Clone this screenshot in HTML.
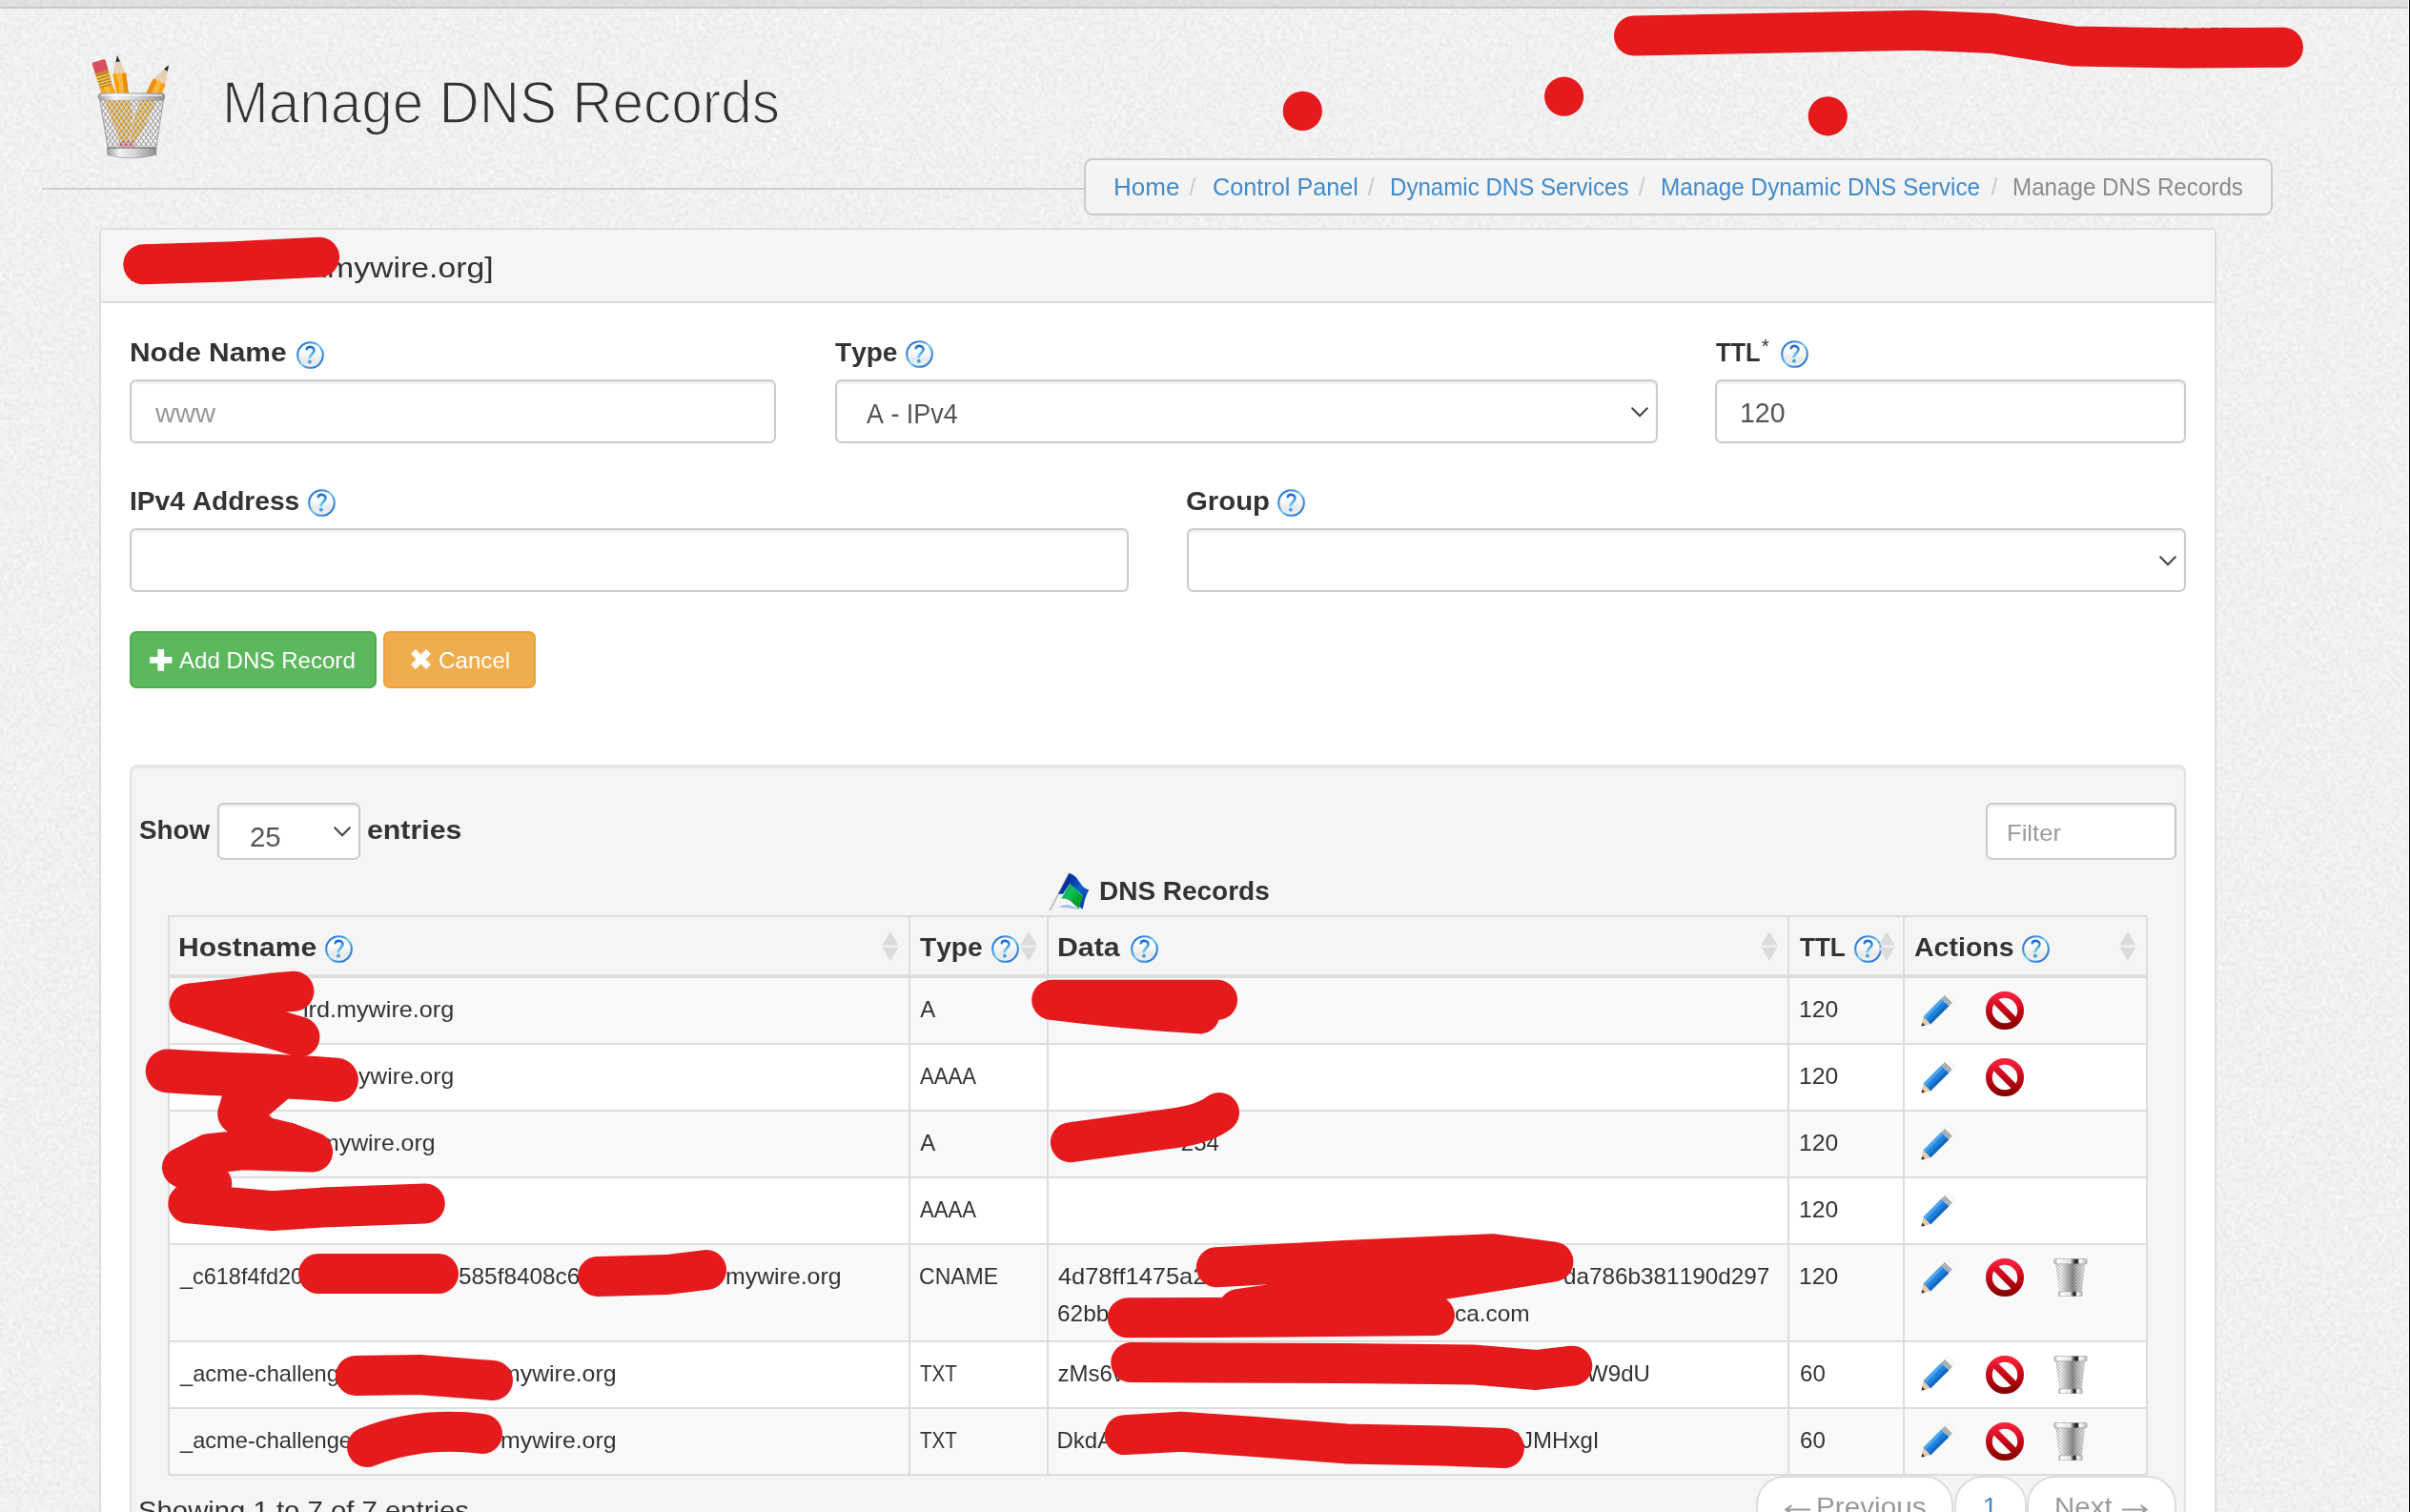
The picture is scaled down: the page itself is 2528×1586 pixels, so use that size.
<!DOCTYPE html>
<html><head><meta charset="utf-8"><title>Manage DNS Records</title>
<style>
html,body{margin:0;padding:0;}
body{width:2528px;height:1586px;overflow:hidden;background:#f0f0f0;font-family:"Liberation Sans",sans-serif;}
#pg{position:absolute;left:0;top:0;width:2528px;height:1586px;overflow:hidden;will-change:transform;}
.t{position:absolute;font-kerning:none;white-space:nowrap;line-height:1;display:block;}
.b{position:absolute;box-sizing:border-box;display:block;}
.inp{background:#fff;border:2px solid #ccc;border-radius:6.5px;box-shadow:inset 0 2px 2px rgba(0,0,0,.075);}
</style></head>
<body>
<svg width="0" height="0" style="position:absolute">
<defs>
<linearGradient id="hg" x1="0.15" y1="0.15" x2="0.85" y2="0.85"><stop offset="0" stop-color="#2b7bd8"/><stop offset="0.32" stop-color="#4d9fe4"/><stop offset="0.5" stop-color="#74d0f6"/><stop offset="0.68" stop-color="#4d9fe4"/><stop offset="1" stop-color="#2b7bd8"/></linearGradient>
<linearGradient id="hf" x1="0" y1="0" x2="0" y2="1"><stop offset="0" stop-color="#ffffff"/><stop offset="0.35" stop-color="#ffffff"/><stop offset="0.7" stop-color="#e9e9e9"/><stop offset="1" stop-color="#f1f1f1"/></linearGradient>
<linearGradient id="hq" gradientUnits="userSpaceOnUse" x1="0" y1="6" x2="0" y2="18"><stop offset="0" stop-color="#1a68ca"/><stop offset="0.45" stop-color="#4aa6e8"/><stop offset="1" stop-color="#72d2f6"/></linearGradient>
<linearGradient id="fb" x1="0" y1="0" x2="1" y2="0.6"><stop offset="0" stop-color="#0d2f9a"/><stop offset="0.35" stop-color="#07309f"/><stop offset="0.7" stop-color="#0a62cf"/><stop offset="1" stop-color="#0b3fae"/></linearGradient>
<linearGradient id="fgn" x1="0" y1="0" x2="1" y2="1"><stop offset="0" stop-color="#06a02a"/><stop offset="0.4" stop-color="#0cc060"/><stop offset="0.7" stop-color="#05a01c"/><stop offset="1" stop-color="#0aa830"/></linearGradient>
<linearGradient id="ng2" gradientUnits="userSpaceOnUse" x1="0" y1="3" x2="0" y2="37"><stop offset="0" stop-color="#f5213a"/><stop offset="0.4" stop-color="#d00a1e"/><stop offset="1" stop-color="#8a0000"/></linearGradient>
<linearGradient id="ng" x1="0" y1="0" x2="0" y2="1"><stop offset="0" stop-color="#f5213a"/><stop offset="0.45" stop-color="#cc0a1c"/><stop offset="1" stop-color="#8a0000"/></linearGradient>
<linearGradient id="tg" x1="0" y1="0" x2="1" y2="0"><stop offset="0" stop-color="#d8d8d8"/><stop offset="0.18" stop-color="#f6f6f6"/><stop offset="0.42" stop-color="#b8b8b8"/><stop offset="0.58" stop-color="#8a8a8a"/><stop offset="0.75" stop-color="#c4c4c4"/><stop offset="1" stop-color="#ededed"/></linearGradient>
<linearGradient id="tr" x1="0" y1="0" x2="1" y2="0"><stop offset="0" stop-color="#b0b0b0"/><stop offset="0.12" stop-color="#ffffff"/><stop offset="0.5" stop-color="#e2e2e2"/><stop offset="0.6" stop-color="#555"/><stop offset="0.7" stop-color="#111"/><stop offset="0.78" stop-color="#ffffff"/><stop offset="1" stop-color="#b8b8b8"/></linearGradient>
<linearGradient id="cupg" x1="0" y1="0" x2="1" y2="0"><stop offset="0" stop-color="#9c9c9c"/><stop offset="0.25" stop-color="#f4f4f4"/><stop offset="0.6" stop-color="#d0d0d0"/><stop offset="1" stop-color="#8f8f8f"/></linearGradient>
<pattern id="mesh" width="5" height="7" patternUnits="userSpaceOnUse"><path d="M0,0L5,7M5,0L0,7" stroke="#8f8f8f" stroke-width="1.1" fill="none"/></pattern>
<pattern id="meshw" width="5" height="7" patternUnits="userSpaceOnUse" x="1.2" y="0"><path d="M0,0L5,7M5,0L0,7" stroke="#ffffff" stroke-width="0.9" fill="none" opacity="0.85"/></pattern>
<pattern id="mesh2" width="2.6" height="2.6" patternUnits="userSpaceOnUse" patternTransform="rotate(45)"><circle cx="1.3" cy="1.3" r="0.75" fill="#3a3a3a" opacity="0.5"/></pattern>

<symbol id="help" viewBox="0 0 29 29">
 <circle cx="14.5" cy="14.5" r="13.3" fill="url(#hf)" stroke="url(#hg)" stroke-width="2.1"/>
 <path d="M10.7,8.3 C11.6,6.3 14,5.7 16,6.3 C18.5,7.1 19.1,9.4 17.9,11.3 C16.7,13.2 14.5,14.8 13.6,17.3" fill="none" stroke="url(#hq)" stroke-width="2.7" stroke-linecap="round"/>
 <circle cx="13.9" cy="21.7" r="1.9" fill="#3f9be6"/>
</symbol>

<symbol id="pencil" viewBox="0 0 36 36">
 <path d="M0.4,35.6 L2.6,25.6 L10.2,33.2 Z" fill="#ecc9a2"/>
 <path d="M0.4,35.6 L1.3,31.6 L4.4,34.7 Z" fill="#3c332e"/>
 <path d="M2.6,25.6 L21.6,6.4 L29.4,14.2 L10.2,33.2 Z" fill="#1f82dc"/>
 <path d="M2.6,25.6 L21.6,6.4 L24,8.8 L5,28 Z" fill="#4da4ee"/>
 <path d="M7.8,30.8 L27,11.8 L29.4,14.2 L10.2,33.2 Z" fill="#1468bd"/>
 <path d="M21.6,6.4 L25.2,2.8 L33,10.6 L29.4,14.2 Z" fill="#c4c8cb"/>
 <path d="M22.6,5.4 L30.4,13.2 M24.2,3.8 L32,11.6" stroke="#777d82" stroke-width="1"/>
 <path d="M25.2,2.8 L27.4,0.8 Q28.4,0 29.4,1 L35,6.6 Q35.8,7.6 35,8.4 L33,10.6 Z" fill="#fafafa" stroke="#dcdcdc" stroke-width="0.5"/>
</symbol>

<symbol id="noent" viewBox="0 0 40 40">
 <circle cx="20" cy="20" r="16.6" fill="none" stroke="url(#ng)" stroke-width="6.8"/>
 <path d="M8.8,8.8 L31.2,31.2" stroke="url(#ng2)" stroke-width="7"/>
</symbol>

<symbol id="trash" viewBox="0 0 36 40">
 <path d="M2.2,5 L33.4,5 L29.8,35.6 L6.2,35.6 Z" fill="url(#tg)"/>
 <path d="M2.2,5 L33.4,5 L29.8,35.6 L6.2,35.6 Z" fill="url(#mesh2)"/>
 <rect x="0.8" y="0.5" width="34.3" height="5.3" rx="1.2" fill="url(#tr)" stroke="#8a8a8a" stroke-width="0.5"/>
 <rect x="5.6" y="34.8" width="24.6" height="4.9" rx="1" fill="url(#tr)" stroke="#8a8a8a" stroke-width="0.5"/>
</symbol>

<symbol id="flag" viewBox="0 0 60 54">
 <path d="M16.4,43.8 C22,39.4 30,40 39.6,46.6 C30,44.6 23,44.2 16.4,43.8Z" fill="#9db9ea" opacity="0.85"/>
 <path d="M27.6,7.4 L7.2,47.2" stroke="#a2a2a2" stroke-width="1.1"/>
 <path d="M28.4,7.8 L8,47.6" stroke="#d8d8d8" stroke-width="0.7"/>
 <path d="M27.5,7.9 C33,9.5 36.2,13 39.3,18.6 C42,23 45,24.6 48.2,25.4 C45,31 43,38 41.8,45.7 C40,44.6 38.6,43.4 37.5,42.2 L41.8,31.4 L28.2,19.3 L21,29.7 L16.1,29.7 Z" fill="url(#fb)"/>
 <path d="M28.6,19.6 L13.8,45.6" stroke="#efefef" stroke-width="1.2"/>
 <path d="M28.2,19.3 C32,21 35,25 38,28.5 C40,30.4 41,31 41.8,31.4 C40,36 38.8,40.6 37.9,45.4 C34,42 30,37.2 26,35.4 C23,34.3 21,34.5 19.3,34.5 Z" fill="url(#fgn)"/>
</symbol>

<symbol id="sort" viewBox="0 0 18 31">
 <path d="M9,0 L17.6,14.4 L0.4,14.4 Z" fill="#dcdcdc"/>
 <path d="M9,31 L17.6,16.6 L0.4,16.6 Z" fill="#dcdcdc"/>
</symbol>

<symbol id="chev" viewBox="0 0 18 11">
 <path d="M1.2,1.2 L9,9.3 L16.8,1.2" fill="none" stroke="#444" stroke-width="2" stroke-linecap="round" stroke-linejoin="miter"/>
</symbol>

<symbol id="cup" viewBox="0 0 104 125">
 <!-- eraser pencil -->
 <path d="M10.6,16.9 Q11,15.6 12.5,15.2 L22.4,12.2 Q24,11.9 24.6,13.2 L27.7,23.6 L13.9,27.7 Z" fill="#d9505c"/>
 <path d="M13.9,27.7 L27.7,23.6 L31.8,38.9 L19,43 Z" fill="#c58a1a"/>
 <path d="M15.2,31.6 L28.7,27.5 M16.2,34.6 L29.6,30.6 M17.2,37.6 L30.5,33.7 M18.2,40.5 L31.3,36.7" stroke="#f1cf7a" stroke-width="1.3"/>
 <path d="M19,43 L31.8,38.9 L36,48.6 L20.5,48.6 Z" fill="#f7a20f"/>
 <path d="M23,41.7 L27.6,40.3 L31,48.6 L25,48.6Z" fill="#fdb83e"/>
 <!-- middle pencil -->
 <path d="M37,8.3 L46.3,27.3 L32.2,28.5 Z" fill="#ebcfb2"/>
 <path d="M37,8.3 L39.9,14.4 L35.4,15 Z" fill="#2a2a2a"/>
 <path d="M32.2,28.5 Q34.5,26 36.5,28.1 Q39.4,25.4 42,27.7 Q44.4,25.6 46.3,27.3 L48.9,48.6 L36.4,48.6 Z" fill="#f7a20f"/>
 <path d="M36.5,28.1 Q39.4,25.4 42,27.7 L44.5,48.6 L40,48.6 Z" fill="#fdb83e"/>
 <path d="M42,27.7 Q44.4,25.6 46.3,27.3 L48.9,48.6 L44.5,48.6Z" fill="#e8900a"/>
 <!-- right pencil -->
 <path d="M90.9,18.2 L87.6,38.9 L74.4,33.1 Z" fill="#ebcfb2"/>
 <path d="M90.9,18.2 L89.9,24.7 L85.9,22.4 Z" fill="#2a2a2a"/>
 <path d="M74.4,33.1 Q77.6,32.3 78.6,35 Q82,34 83.2,37 Q86,36.4 87.6,38.9 L83.5,48.6 L67,48.6 Z" fill="#f7a20f"/>
 <path d="M78.6,35 Q82,34 83.2,37 L78.5,48.6 L72.5,48.6 Z" fill="#fdb83e"/>
 <path d="M74.4,33.1 Q77.6,32.3 78.6,35 L72.5,48.6 L67,48.6Z" fill="#e8900a"/>
 <!-- basket body -->
 <path d="M18.6,54 L85.6,54 L77.7,106 L27.3,106 Z" fill="#e9e9e9"/>
 <path d="M23.1,55 L51.3,55 L53,72 L49,100 L41,100 Z" fill="#f5a614"/>
 <path d="M61.2,55 L78,55 L62,90 L54,101 L50,100 L53,80 Z" fill="#f5a614"/>
 <path d="M39.5,98 L55,98 L55.4,107 L39,107Z" fill="#d9505c"/>
 <path d="M18.6,54 L85.6,54 L77.7,106 L27.3,106 Z" fill="url(#mesh)"/>
 <path d="M18.6,54 L85.6,54 L77.7,106 L27.3,106 Z" fill="url(#meshw)"/>
 <path d="M18.6,54 L27.3,106 M85.6,54 L77.7,106" stroke="#a8a8a8" stroke-width="1.2"/>
 <!-- rim -->
 <rect x="16.9" y="47.6" width="70.1" height="7.8" rx="3.9" fill="url(#cupg)" stroke="#9a9a9a" stroke-width="0.6"/>
 <path d="M20,50 H84" stroke="#fff" stroke-width="1.6" opacity="0.8"/>
 <!-- base -->
 <path d="M26.3,104.5 L78.1,104.5 L77.8,112.5 Q52,119 26.6,112.5 Z" fill="url(#cupg)" stroke="#8a8a8a" stroke-width="0.6"/>
 <path d="M27,105.5 H77.5" stroke="#666" stroke-width="1.2" opacity="0.6"/>
</symbol>
</defs>
</svg>
<svg class="b" style="left:0;top:0" width="2528" height="1586"><filter id="nz" x="0" y="0" width="100%" height="100%" color-interpolation-filters="sRGB"><feTurbulence type="fractalNoise" baseFrequency="0.22" numOctaves="2" seed="7"/><feColorMatrix type="matrix" values="0.09 0 0 0 0.899  0.09 0 0 0 0.899  0.09 0 0 0 0.899  0 0 0 0 1"/></filter><rect width="2528" height="1586" filter="url(#nz)"/></svg>
<div id="pg">
<div class="b" style="left:0.00px;top:0.00px;width:2528.00px;height:7.00px;background:rgba(0,0,0,0.068);"></div>
<div class="b" style="left:0.00px;top:7.00px;width:2528.00px;height:2.00px;background:#c9c9c9;"></div>
<div class="b" style="left:2526.00px;top:0.00px;width:1.00px;height:1586.00px;background:#fff;"></div>
<div class="b" style="left:2527.00px;top:0.00px;width:1.00px;height:1586.00px;background:#000;"></div>
<svg class="b" style="left:86.00px;top:50.00px;" width="104" height="125"><use href="#cup"/></svg>
<span class="t" style="left:233.40px;top:76.07px;font-size:63.0px;color:#333;letter-spacing:0.000px;transform:scaleX(0.9283);transform-origin:0 0;-webkit-text-stroke:1.7px #f0f0f0;">Manage DNS Records</span>
<span class="t" style="left:2231.72px;top:26.38px;font-size:22.0px;color:#555;letter-spacing:0.000px;">98.212.177.204</span>
<div class="b" style="left:44.00px;top:197.00px;width:1094.00px;height:2.00px;background:#cfcfcf;"></div>
<div class="b" style="left:1137.30px;top:165.90px;width:1247.00px;height:60.30px;background:#f4f4f4;border:2px solid #cbcbcb;border-radius:9px;"></div>
<span class="t" style="left:1167.77px;top:184.14px;font-size:25.0px;color:#428bca;letter-spacing:0.000px;transform:scaleX(1.0405);transform-origin:0 0;">Home</span>
<span class="t" style="left:1247.50px;top:184.14px;font-size:25.0px;color:#ccc;letter-spacing:0.000px;">/</span>
<span class="t" style="left:1272.22px;top:184.14px;font-size:25.0px;color:#428bca;letter-spacing:0.000px;transform:scaleX(1.0099);transform-origin:0 0;">Control Panel</span>
<span class="t" style="left:1434.70px;top:184.14px;font-size:25.0px;color:#ccc;letter-spacing:0.000px;">/</span>
<span class="t" style="left:1458.42px;top:184.14px;font-size:25.0px;color:#428bca;letter-spacing:0.000px;transform:scaleX(0.9641);transform-origin:0 0;">Dynamic DNS Services</span>
<span class="t" style="left:1718.80px;top:184.14px;font-size:25.0px;color:#ccc;letter-spacing:0.000px;">/</span>
<span class="t" style="left:1742.41px;top:184.14px;font-size:25.0px;color:#428bca;letter-spacing:0.000px;transform:scaleX(0.9724);transform-origin:0 0;">Manage Dynamic DNS Service</span>
<span class="t" style="left:2088.50px;top:184.14px;font-size:25.0px;color:#ccc;letter-spacing:0.000px;">/</span>
<span class="t" style="left:2111.22px;top:184.14px;font-size:25.0px;color:#8c8c8c;letter-spacing:0.000px;transform:scaleX(0.9674);transform-origin:0 0;">Manage DNS Records</span>
<div class="b" style="left:104.00px;top:239.00px;width:2221.00px;height:1461.00px;background:#fff;border:2px solid #dedede;border-radius:6px;"></div>
<div class="b" style="left:106.00px;top:241.00px;width:2217.00px;height:75.00px;background:#f5f5f5;border-radius:4px 4px 0 0;"></div>
<div class="b" style="left:106.00px;top:316.00px;width:2217.00px;height:2.00px;background:#ddd;"></div>
<span class="t" style="left:134.93px;top:264.95px;font-size:29.0px;color:#999;letter-spacing:0.000px;">[</span>
<span class="t" style="left:149.01px;top:266.75px;font-size:29.0px;color:#333;letter-spacing:0.000px;transform:scaleX(1.2301);transform-origin:0 0;">someserver.</span>
<span class="t" style="left:342.66px;top:266.75px;font-size:29.0px;color:#333;letter-spacing:0.000px;transform:scaleX(1.1655);transform-origin:0 0;">mywire.org]</span>
<span class="t" style="left:136.30px;top:356.00px;font-size:28.0px;font-weight:bold;color:#333;letter-spacing:0.000px;transform:scaleX(1.0687);transform-origin:0 0;">Node Name</span>
<svg class="b" style="left:310.50px;top:357.50px;" width="29" height="29"><use href="#help"/></svg>
<span class="t" style="left:875.68px;top:356.00px;font-size:28.0px;font-weight:bold;color:#333;letter-spacing:0.000px;transform:scaleX(1.0019);transform-origin:0 0;">Type</span>
<svg class="b" style="left:949.80px;top:357.10px;" width="29" height="29"><use href="#help"/></svg>
<span class="t" style="left:1799.71px;top:356.00px;font-size:28.0px;font-weight:bold;color:#333;letter-spacing:0.000px;transform:scaleX(0.9095);transform-origin:0 0;">TTL</span>
<svg class="b" style="left:1867.50px;top:357.10px;" width="29" height="29"><use href="#help"/></svg>
<span class="t" style="left:1847.66px;top:351.72px;font-size:21.0px;color:#333;letter-spacing:0.000px;">*</span>
<span class="t" style="left:136.42px;top:511.90px;font-size:28.0px;font-weight:bold;color:#333;letter-spacing:0.000px;transform:scaleX(1.0046);transform-origin:0 0;">IPv4 Address</span>
<svg class="b" style="left:322.50px;top:512.90px;" width="29" height="29"><use href="#help"/></svg>
<span class="t" style="left:1244.40px;top:511.90px;font-size:28.0px;font-weight:bold;color:#333;letter-spacing:0.000px;transform:scaleX(1.0479);transform-origin:0 0;">Group</span>
<svg class="b" style="left:1340.20px;top:512.90px;" width="29" height="29"><use href="#help"/></svg>
<div class="b inp" style="left:136.00px;top:398.00px;width:678.40px;height:67.40px;"></div>
<span class="t" style="left:163.04px;top:419.60px;font-size:28.0px;color:#999;letter-spacing:0.000px;transform:scaleX(1.0400);transform-origin:0 0;">www</span>
<div class="b inp" style="left:875.60px;top:398.00px;width:863.20px;height:67.40px;"></div>
<span class="t" style="left:909.15px;top:419.75px;font-size:29.0px;color:#555;letter-spacing:0.000px;transform:scaleX(0.9273);transform-origin:0 0;">A - IPv4</span>
<svg class="b" style="left:1710.80px;top:427.40px;" width="18" height="11"><use href="#chev"/></svg>
<div class="b inp" style="left:1799.20px;top:398.00px;width:493.40px;height:67.40px;"></div>
<span class="t" style="left:1825.23px;top:418.75px;font-size:29.0px;color:#555;letter-spacing:0.000px;transform:scaleX(0.9835);transform-origin:0 0;">120</span>
<div class="b inp" style="left:136.00px;top:554.00px;width:1047.60px;height:67.20px;"></div>
<div class="b inp" style="left:1244.60px;top:554.00px;width:1048.00px;height:67.20px;"></div>
<svg class="b" style="left:2264.60px;top:583.00px;" width="18" height="11"><use href="#chev"/></svg>
<div class="b" style="left:136.20px;top:661.80px;width:258.70px;height:60.20px;background:#5cb85c;border:2px solid #4cae4c;border-radius:7px;"></div>
<svg class="b" style="left:157.3px;top:680.6px" width="24" height="23"><path d="M8.4,0h6.8v8h8.2v6.8h-8.2v8h-6.8v-8h-8.2v-6.8h8.2z" fill="#fff"/></svg>
<span class="t" style="left:188.45px;top:681.18px;font-size:24.0px;color:#fff;letter-spacing:0.000px;transform:scaleX(1.0039);transform-origin:0 0;">Add DNS Record</span>
<div class="b" style="left:402.20px;top:661.80px;width:159.70px;height:60.20px;background:#f0ad4e;border:2px solid #eea236;border-radius:7px;"></div>
<svg class="b" style="left:431px;top:681px" width="21" height="21"><path d="M4.9,0 L10.5,5.6 L16.1,0 L21,4.9 L15.4,10.5 L21,16.1 L16.1,21 L10.5,15.4 L4.9,21 L0,16.1 L5.6,10.5 L0,4.9 Z" fill="#fff"/></svg>
<span class="t" style="left:459.67px;top:681.18px;font-size:24.0px;color:#fff;letter-spacing:0.000px;transform:scaleX(1.0072);transform-origin:0 0;">Cancel</span>
<div class="b" style="left:136.20px;top:802.40px;width:2157.00px;height:897.60px;background:#f5f5f5;border:2px solid #e3e3e3;border-radius:8px;box-shadow:inset 0 2px 2px rgba(0,0,0,.05);"></div>
<span class="t" style="left:145.80px;top:857.00px;font-size:28.0px;font-weight:bold;color:#333;letter-spacing:0.000px;transform:scaleX(0.9931);transform-origin:0 0;">Show</span>
<div class="b inp" style="left:228.30px;top:842.00px;width:149.40px;height:60.00px;"></div>
<span class="t" style="left:261.72px;top:863.75px;font-size:29.0px;color:#555;letter-spacing:0.000px;transform:scaleX(1.0142);transform-origin:0 0;">25</span>
<svg class="b" style="left:350.00px;top:867.20px;" width="18" height="11"><use href="#chev"/></svg>
<span class="t" style="left:385.42px;top:857.00px;font-size:28.0px;font-weight:bold;color:#333;letter-spacing:0.000px;transform:scaleX(1.0817);transform-origin:0 0;">entries</span>
<div class="b inp" style="left:2083.20px;top:842.00px;width:199.60px;height:60.00px;"></div>
<span class="t" style="left:2104.50px;top:861.66px;font-size:24.5px;color:#999;letter-spacing:0.000px;transform:scaleX(1.0456);transform-origin:0 0;">Filter</span>
<svg class="b" style="left:1094.00px;top:908.00px;" width="60" height="54"><use href="#flag"/></svg>
<span class="t" style="left:1152.93px;top:921.10px;font-size:28.0px;font-weight:bold;color:#333;letter-spacing:0.000px;transform:scaleX(0.9988);transform-origin:0 0;">DNS Records</span>
<div class="b" style="left:176.00px;top:1026.00px;width:2077.00px;height:68.00px;background:#f9f9f9;"></div>
<div class="b" style="left:176.00px;top:1096.00px;width:2077.00px;height:67.80px;background:#ffffff;"></div>
<div class="b" style="left:176.00px;top:1165.80px;width:2077.00px;height:67.90px;background:#f9f9f9;"></div>
<div class="b" style="left:176.00px;top:1235.70px;width:2077.00px;height:67.90px;background:#ffffff;"></div>
<div class="b" style="left:176.00px;top:1305.60px;width:2077.00px;height:100.10px;background:#f9f9f9;"></div>
<div class="b" style="left:176.00px;top:1407.70px;width:2077.00px;height:68.00px;background:#ffffff;"></div>
<div class="b" style="left:176.00px;top:1477.70px;width:2077.00px;height:67.90px;background:#f9f9f9;"></div>
<div class="b" style="left:176.00px;top:960.40px;width:2077.00px;height:2.00px;background:#ddd;"></div>
<div class="b" style="left:176.00px;top:1022.20px;width:2077.00px;height:3.80px;background:#ddd;"></div>
<div class="b" style="left:176.00px;top:1094.00px;width:2077.00px;height:2.00px;background:#ddd;"></div>
<div class="b" style="left:176.00px;top:1163.80px;width:2077.00px;height:2.00px;background:#ddd;"></div>
<div class="b" style="left:176.00px;top:1233.70px;width:2077.00px;height:2.00px;background:#ddd;"></div>
<div class="b" style="left:176.00px;top:1303.60px;width:2077.00px;height:2.00px;background:#ddd;"></div>
<div class="b" style="left:176.00px;top:1405.70px;width:2077.00px;height:2.00px;background:#ddd;"></div>
<div class="b" style="left:176.00px;top:1475.70px;width:2077.00px;height:2.00px;background:#ddd;"></div>
<div class="b" style="left:176.00px;top:1545.60px;width:2077.00px;height:2.00px;background:#ddd;"></div>
<div class="b" style="left:176.00px;top:960.40px;width:2.00px;height:587.20px;background:#ddd;"></div>
<div class="b" style="left:953.00px;top:960.40px;width:2.00px;height:587.20px;background:#ddd;"></div>
<div class="b" style="left:1098.00px;top:960.40px;width:2.00px;height:587.20px;background:#ddd;"></div>
<div class="b" style="left:1875.00px;top:960.40px;width:2.00px;height:587.20px;background:#ddd;"></div>
<div class="b" style="left:1996.00px;top:960.40px;width:2.00px;height:587.20px;background:#ddd;"></div>
<div class="b" style="left:2251.00px;top:960.40px;width:2.00px;height:587.20px;background:#ddd;"></div>
<span class="t" style="left:187.49px;top:979.50px;font-size:28.0px;font-weight:bold;color:#333;letter-spacing:0.000px;transform:scaleX(1.0722);transform-origin:0 0;">Hostname</span>
<svg class="b" style="left:340.50px;top:981.30px;" width="29" height="29"><use href="#help"/></svg>
<svg class="b" style="left:924.90px;top:976.80px;" width="18" height="31"><use href="#sort"/></svg>
<span class="t" style="left:965.08px;top:979.50px;font-size:28.0px;font-weight:bold;color:#333;letter-spacing:0.000px;transform:scaleX(1.0034);transform-origin:0 0;">Type</span>
<svg class="b" style="left:1039.50px;top:981.30px;" width="29" height="29"><use href="#help"/></svg>
<svg class="b" style="left:1070.20px;top:976.80px;" width="18" height="31"><use href="#sort"/></svg>
<span class="t" style="left:1109.17px;top:979.50px;font-size:28.0px;font-weight:bold;color:#333;letter-spacing:0.000px;transform:scaleX(1.0815);transform-origin:0 0;">Data</span>
<svg class="b" style="left:1185.70px;top:981.30px;" width="29" height="29"><use href="#help"/></svg>
<svg class="b" style="left:1846.70px;top:976.80px;" width="18" height="31"><use href="#sort"/></svg>
<span class="t" style="left:1887.51px;top:979.50px;font-size:28.0px;font-weight:bold;color:#333;letter-spacing:0.000px;transform:scaleX(0.9315);transform-origin:0 0;">TTL</span>
<svg class="b" style="left:1944.60px;top:981.30px;" width="29" height="29"><use href="#help"/></svg>
<svg class="b" style="left:1969.90px;top:976.80px;" width="18" height="31"><use href="#sort"/></svg>
<span class="t" style="left:2008.09px;top:979.50px;font-size:28.0px;font-weight:bold;color:#333;letter-spacing:0.000px;transform:scaleX(1.0195);transform-origin:0 0;">Actions</span>
<svg class="b" style="left:2120.60px;top:981.30px;" width="29" height="29"><use href="#help"/></svg>
<svg class="b" style="left:2223.00px;top:976.80px;" width="18" height="31"><use href="#sort"/></svg>
<span class="t" style="left:965.15px;top:1047.08px;font-size:24.0px;color:#333;letter-spacing:0.000px;">A</span>
<span class="t" style="left:1886.92px;top:1047.08px;font-size:24.0px;color:#333;letter-spacing:0.000px;transform:scaleX(1.0301);transform-origin:0 0;">120</span>
<span class="t" style="left:965.16px;top:1117.08px;font-size:24.0px;color:#333;letter-spacing:0.000px;transform:scaleX(0.9228);transform-origin:0 0;">AAAA</span>
<span class="t" style="left:1886.92px;top:1117.08px;font-size:24.0px;color:#333;letter-spacing:0.000px;transform:scaleX(1.0301);transform-origin:0 0;">120</span>
<span class="t" style="left:965.15px;top:1186.88px;font-size:24.0px;color:#333;letter-spacing:0.000px;">A</span>
<span class="t" style="left:1886.92px;top:1186.88px;font-size:24.0px;color:#333;letter-spacing:0.000px;transform:scaleX(1.0301);transform-origin:0 0;">120</span>
<span class="t" style="left:965.16px;top:1256.78px;font-size:24.0px;color:#333;letter-spacing:0.000px;transform:scaleX(0.9228);transform-origin:0 0;">AAAA</span>
<span class="t" style="left:1886.92px;top:1256.78px;font-size:24.0px;color:#333;letter-spacing:0.000px;transform:scaleX(1.0301);transform-origin:0 0;">120</span>
<span class="t" style="left:964.03px;top:1326.68px;font-size:24.0px;color:#333;letter-spacing:0.000px;transform:scaleX(0.9595);transform-origin:0 0;">CNAME</span>
<span class="t" style="left:1886.92px;top:1326.68px;font-size:24.0px;color:#333;letter-spacing:0.000px;transform:scaleX(1.0301);transform-origin:0 0;">120</span>
<span class="t" style="left:964.74px;top:1428.78px;font-size:24.0px;color:#333;letter-spacing:0.000px;transform:scaleX(0.8590);transform-origin:0 0;">TXT</span>
<span class="t" style="left:1887.58px;top:1428.78px;font-size:24.0px;color:#333;letter-spacing:0.000px;transform:scaleX(1.0025);transform-origin:0 0;">60</span>
<span class="t" style="left:964.74px;top:1498.78px;font-size:24.0px;color:#333;letter-spacing:0.000px;transform:scaleX(0.8590);transform-origin:0 0;">TXT</span>
<span class="t" style="left:1887.58px;top:1498.78px;font-size:24.0px;color:#333;letter-spacing:0.000px;transform:scaleX(1.0025);transform-origin:0 0;">60</span>
<span class="t" style="left:317.81px;top:1047.08px;font-size:24.0px;color:#333;letter-spacing:0.000px;transform:scaleX(1.0499);transform-origin:0 0;">ird.mywire.org</span>
<span class="t" style="left:375.74px;top:1117.08px;font-size:24.0px;color:#333;letter-spacing:0.000px;transform:scaleX(1.0297);transform-origin:0 0;">ywire.org</span>
<span class="t" style="left:334.75px;top:1186.88px;font-size:24.0px;color:#333;letter-spacing:0.000px;transform:scaleX(1.0358);transform-origin:0 0;">mywire.org</span>
<span class="t" style="left:189.05px;top:1326.68px;font-size:24.0px;color:#333;letter-spacing:0.000px;transform:scaleX(0.9769);transform-origin:0 0;">_c618f4fd20</span>
<span class="t" style="left:480.72px;top:1326.68px;font-size:24.0px;color:#333;letter-spacing:0.000px;transform:scaleX(1.0151);transform-origin:0 0;">585f8408c6</span>
<span class="t" style="left:761.45px;top:1326.68px;font-size:24.0px;color:#333;letter-spacing:0.000px;transform:scaleX(1.0358);transform-origin:0 0;">mywire.org</span>
<span class="t" style="left:189.06px;top:1428.78px;font-size:24.0px;color:#333;letter-spacing:0.000px;transform:scaleX(0.9848);transform-origin:0 0;">_acme-challenge</span>
<span class="t" style="left:524.85px;top:1428.78px;font-size:24.0px;color:#333;letter-spacing:0.000px;transform:scaleX(1.0358);transform-origin:0 0;">mywire.org</span>
<span class="t" style="left:189.06px;top:1498.78px;font-size:24.0px;color:#333;letter-spacing:0.000px;transform:scaleX(0.9848);transform-origin:0 0;">_acme-challenge</span>
<span class="t" style="left:524.85px;top:1498.78px;font-size:24.0px;color:#333;letter-spacing:0.000px;transform:scaleX(1.0358);transform-origin:0 0;">mywire.org</span>
<span class="t" style="left:1238.86px;top:1186.88px;font-size:24.0px;color:#333;letter-spacing:0.000px;">254</span>
<span class="t" style="left:1109.92px;top:1326.68px;font-size:24.0px;color:#333;letter-spacing:0.000px;transform:scaleX(1.0582);transform-origin:0 0;">4d78ff1475a2</span>
<span class="t" style="left:1640.08px;top:1326.68px;font-size:24.0px;color:#333;letter-spacing:0.000px;transform:scaleX(1.0125);transform-origin:0 0;">da786b381190d297</span>
<span class="t" style="left:1109.26px;top:1366.28px;font-size:24.0px;color:#333;letter-spacing:0.000px;transform:scaleX(1.0163);transform-origin:0 0;">62bb</span>
<span class="t" style="left:1525.76px;top:1366.28px;font-size:24.0px;color:#333;letter-spacing:0.000px;transform:scaleX(1.0167);transform-origin:0 0;">ca.com</span>
<span class="t" style="left:1109.53px;top:1428.78px;font-size:24.0px;color:#333;letter-spacing:0.000px;">zMs6v</span>
<span class="t" style="left:1663.89px;top:1428.78px;font-size:24.0px;color:#333;letter-spacing:0.000px;transform:scaleX(1.0043);transform-origin:0 0;">W9dU</span>
<span class="t" style="left:1108.53px;top:1498.78px;font-size:24.0px;color:#333;letter-spacing:0.000px;">DkdA</span>
<span class="t" style="left:1580.07px;top:1498.78px;font-size:24.0px;color:#333;letter-spacing:0.000px;">BJMHxgI</span>
<svg class="b" style="left:2015.00px;top:1041.00px;" width="36" height="36"><use href="#pencil"/></svg>
<svg class="b" style="left:2082.60px;top:1040.00px;" width="40" height="40"><use href="#noent"/></svg>
<svg class="b" style="left:2015.00px;top:1111.00px;" width="36" height="36"><use href="#pencil"/></svg>
<svg class="b" style="left:2082.60px;top:1110.00px;" width="40" height="40"><use href="#noent"/></svg>
<svg class="b" style="left:2015.00px;top:1180.80px;" width="36" height="36"><use href="#pencil"/></svg>
<svg class="b" style="left:2015.00px;top:1250.70px;" width="36" height="36"><use href="#pencil"/></svg>
<svg class="b" style="left:2015.00px;top:1320.60px;" width="36" height="36"><use href="#pencil"/></svg>
<svg class="b" style="left:2082.60px;top:1319.60px;" width="40" height="40"><use href="#noent"/></svg>
<svg class="b" style="left:2154.40px;top:1319.60px;" width="36" height="40"><use href="#trash"/></svg>
<svg class="b" style="left:2015.00px;top:1422.70px;" width="36" height="36"><use href="#pencil"/></svg>
<svg class="b" style="left:2082.60px;top:1421.70px;" width="40" height="40"><use href="#noent"/></svg>
<svg class="b" style="left:2154.40px;top:1421.70px;" width="36" height="40"><use href="#trash"/></svg>
<svg class="b" style="left:2015.00px;top:1492.70px;" width="36" height="36"><use href="#pencil"/></svg>
<svg class="b" style="left:2082.60px;top:1491.70px;" width="40" height="40"><use href="#noent"/></svg>
<svg class="b" style="left:2154.40px;top:1491.70px;" width="36" height="40"><use href="#trash"/></svg>
<div class="b" style="left:1842.40px;top:1548.40px;width:207.00px;height:91.60px;background:#fff;border:2px solid #ddd;border-radius:30px;"></div>
<div class="b" style="left:2050.40px;top:1548.40px;width:75.40px;height:91.60px;background:#fff;border:2px solid #ddd;border-radius:30px;"></div>
<div class="b" style="left:2126.20px;top:1548.40px;width:156.40px;height:91.60px;background:#fff;border:2px solid #ddd;border-radius:30px;"></div>
<svg class="b" style="left:1872px;top:1569.2px" width="30" height="22"><path d="M1.5,14.5H27M7.5,10L1.5,14.5L7.5,19" fill="none" stroke="#999" stroke-width="2.1"/></svg>
<span class="t" style="left:1905.06px;top:1567.10px;font-size:28.0px;color:#999;letter-spacing:0.000px;transform:scaleX(1.0603);transform-origin:0 0;">Previous</span>
<span class="t" style="left:2079.87px;top:1567.10px;font-size:28.0px;color:#428bca;letter-spacing:0.000px;">1</span>
<span class="t" style="left:2154.58px;top:1567.10px;font-size:28.0px;color:#999;letter-spacing:0.000px;transform:scaleX(1.0532);transform-origin:0 0;">Next</span>
<svg class="b" style="left:2225px;top:1569.2px" width="30" height="22"><path d="M1,14.5H26.5M20.5,10L26.5,14.5L20.5,19" fill="none" stroke="#999" stroke-width="2.1"/></svg>
<span class="t" style="left:144.67px;top:1571.20px;font-size:28.0px;color:#333;letter-spacing:0.000px;transform:scaleX(1.0463);transform-origin:0 0;">Showing 1 to 7 of 7 entries</span>
</div>
<svg style="position:absolute;left:0;top:0" width="2528" height="1586" viewBox="0 0 2528 1586" fill="none" stroke="#e41a1c" stroke-width="42" stroke-linecap="round" stroke-linejoin="round">
<!-- top right -->
<path d="M1714,37.5 L2012,31.7 L2091,35 L2175,48.6 L2291,50.6 L2395,49.8"/>
<circle cx="1366.3" cy="116.4" r="20.6" fill="#e41a1c" stroke="none"/>
<circle cx="1640.6" cy="101.2" r="20.6" fill="#e41a1c" stroke="none"/>
<circle cx="1917.3" cy="121.8" r="20.6" fill="#e41a1c" stroke="none"/>
<!-- heading -->
<path d="M150.3,277.3 L240,274.5 L335.1,269.8"/>
<!-- host zigzag -->
<path d="M308.4,1039.8 L284.5,1041.7 L246.5,1047.1 L198.6,1052.7 L314.4,1087.7"/>
<path d="M175.7,1123.4 L216,1125.7 L276.9,1128.3 L330.1,1131 L352.9,1132.7" stroke-width="46"/>
<path d="M261.7,1126.5 L249.2,1168.3 L275.8,1192.3 L301.7,1198.4 L328.1,1208.4 L255.6,1206.3 L219.1,1210.1 L191,1224.6 L222.3,1241.7 L197.4,1262.4 L285.6,1270.1 L337.5,1266.6 L445.8,1262.4"/>
<path d="M292.1,1133.8 L251.0,1168.7"/>
<!-- data row1 -->
<path d="M1277.1,1048.8 L1103.2,1048.8 Q1176,1058 1258.6,1063.4"/>
<!-- data row3 -->
<path d="M1122.9,1198.2 L1227,1184 Q1262,1180 1279,1167"/>
<!-- row5 host -->
<path d="M334,1336 L460,1336"/>
<path d="M627,1339 L700,1337 L741,1332"/>
<!-- row5 data -->
<path d="M1275.9,1329.2 L1412,1321.9 L1564.6,1315.2 L1629.4,1323.5 L1511.5,1342.4 L1299.1,1373"/>
<path d="M1182.9,1382.3 L1345.6,1381.6 L1504.9,1379.9"/>
<!-- row6 -->
<path d="M373,1443 L440,1442 L517,1448"/>
<path d="M1186.2,1429.1 L1411.9,1430.1 L1544.7,1431.4 L1611.1,1437 L1649.3,1432.7"/>
<!-- row7 -->
<path d="M385,1518 Q440,1496 506,1504"/>
<path d="M1179.6,1505.1 L1239.3,1501.8 L1312.4,1506.7 L1411.9,1514.4 L1511.5,1516.4 L1577.9,1519"/>
</svg>

</body></html>
